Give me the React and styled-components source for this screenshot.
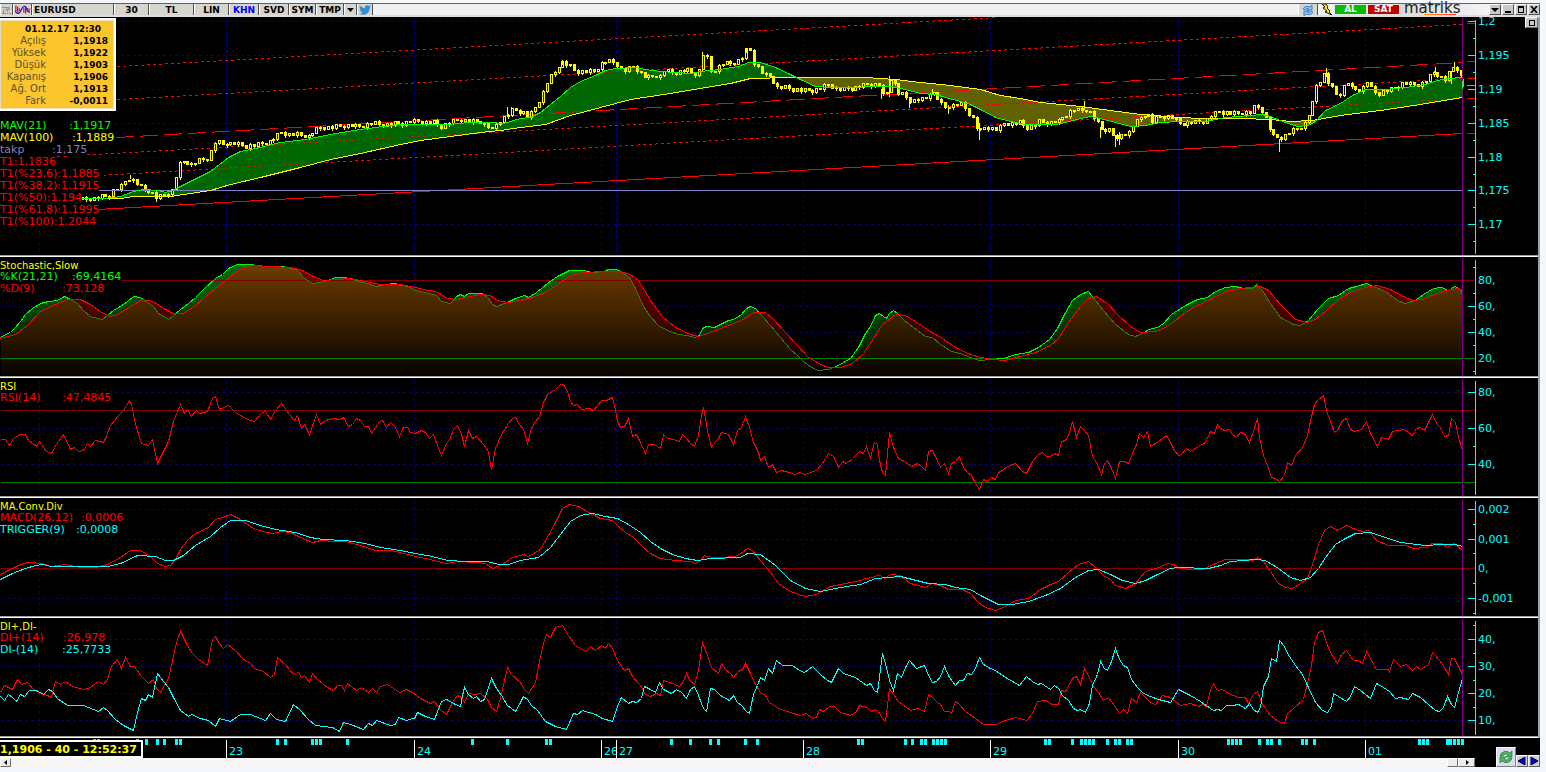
import React from "react";
import styled, { createGlobalStyle } from "styled-components";
import { FaTwitter } from "react-icons/fa";

const PLOT_WIDTH = 1467;
const LAST_X = 1462;
const DAYS = [
  { x: 226, label: "23" },
  { x: 414, label: "24" },
  { x: 601, label: "26" },
  { x: 616, label: "27" },
  { x: 803, label: "28" },
  { x: 990, label: "29" },
  { x: 1178, label: "30" },
  { x: 1365, label: "01" },
];
const GRID_X = [39, ...DAYS.map((day) => day.x)];

const EVENTS = [
  93, 97, 136, 145, 156, 163, 175, 179, 276, 284, 311, 315, 319, 346, 471, 506,
  545, 549, 670, 689, 709, 717, 744, 756, 857, 861, 904, 911, 920, 924, 932,
  936, 940, 944, 1044, 1048, 1071, 1080, 1084, 1088, 1092, 1106, 1114, 1118,
  1126, 1130, 1227, 1231, 1235, 1239, 1258, 1266, 1270, 1278, 1301, 1305, 1313,
  1418, 1422, 1426, 1446, 1449, 1453, 1457, 1461,
];

const MAV21 =
  "80,198 105,198 120,196 133,191 143,189 158,190 165,192 172,190 190,181 210,171 228,157 240,151 255,148 280,142 305,139 330,134 360,129 390,125 400,124 445,124 470,122 490,122 503,123 520,118 530,117 540,112 550,104 560,96 570,87 580,81 595,75 605,70 615,68 635,67 645,69 660,71 690,73 700,71 720,69 738,66 748,62 760,62 775,67 790,74 800,79 815,86 830,87 850,87 875,86 890,86 905,89 920,93 935,94 945,97 960,101 970,104 980,109 995,117 1010,121 1025,124 1055,124 1065,122 1080,118 1090,116 1100,118 1115,122 1130,126 1145,125 1160,122 1180,121 1205,121 1225,117 1250,115 1262,114 1270,116 1285,122 1297,126 1308,125 1315,121 1325,110 1340,103 1352,95 1365,89 1385,89 1405,87 1425,84 1437,80 1448,78 1462,77";
const MAV100 =
  "80,198 120,198 133,196 170,196 190,193 210,190 230,184 260,177 300,167 330,159 360,153 400,144 420,140 450,136 480,132 500,130 520,127 545,124 570,115 600,107 630,99 670,93 700,88 730,83 750,78 790,77 865,77 895,79 920,82 950,85 980,89 1000,95 1020,98 1040,102 1080,106 1110,110 1140,114 1180,117 1200,118 1240,118 1270,119 1290,121 1312,120 1340,115 1380,110 1420,104 1462,97";

const PRICE =
  "80,199 95,198 108,195 115,188 120,187 127,179 130,178 138,184 143,189 150,190 156,197 163,196 169,191 172,190 174,179 178,171 180,162 186,161 190,165 198,160 206,158 210,157 212,143 216,141 222,144 228,142 237,144 246,146 258,144 268,142 275,137 280,132 290,134 298,134 308,136 313,132 318,127 328,127 345,125 360,126 372,123 385,124 400,123 410,121 435,122 441,126 452,121 460,119 470,121 480,121 488,126 493,131 497,122 505,116 512,110 522,111 528,117 533,111 537,103 542,95 545,85 550,77 555,72 558,65 563,62 570,66 575,71 583,71 595,71 600,63 607,61 616,62 620,69 627,70 631,65 637,69 642,75 648,77 655,75 661,76 664,70 672,72 687,70 693,74 699,71 702,53 706,55 711,71 718,67 722,63 733,63 738,60 742,57 746,50 750,50 754,62 760,70 765,75 770,76 777,87 783,87 795,89 800,90 812,90 820,88 828,84 838,89 850,88 862,85 870,84 880,84 882,95 886,97 889,77 893,79 897,93 902,94 910,100 925,99 929,92 935,93 940,103 945,107 950,105 958,104 963,104 966,110 972,117 976,126 980,131 985,126 995,129 1000,127 1003,123 1012,123 1020,122 1025,127 1033,126 1038,121 1045,122 1058,121 1065,115 1073,109 1080,110 1086,109 1092,114 1098,124 1103,131 1108,127 1112,132 1117,140 1120,134 1128,133 1133,125 1140,117 1147,113 1152,121 1158,117 1168,116 1173,117 1178,123 1190,122 1205,121 1210,115 1218,111 1230,113 1250,112 1254,107 1260,107 1264,115 1268,123 1272,135 1280,138 1285,135 1290,131 1298,128 1304,124 1308,116 1313,102 1316,86 1320,80 1324,74 1328,82 1333,89 1337,96 1342,90 1346,80 1352,89 1358,89 1364,87 1368,80 1372,91 1378,93 1385,90 1395,88 1401,83 1414,84 1422,83 1430,76 1434,71 1440,76 1448,80 1450,68 1456,66 1462,78";
const WICKS = [
  [130, 174, 178],
  [156, 196, 201],
  [507, 106, 116],
  [511, 106, 114],
  [562, 59, 64],
  [702, 51, 70],
  [746, 47, 52],
  [753, 50, 60],
  [881, 88, 98],
  [889, 75, 96],
  [909, 98, 107],
  [932, 88, 93],
  [948, 104, 113],
  [979, 122, 139],
  [1084, 100, 109],
  [1100, 126, 137],
  [1115, 134, 146],
  [1119, 131, 144],
  [1279, 138, 151],
  [1326, 67, 76],
  [1435, 66, 72],
  [1451, 70, 83],
  [1454, 61, 68],
];

const STOCH_K =
  "0,337 5,334 10,332 15,327 20,321 25,314 32,308 40,303 48,301 57,300 64,296 70,299 77,303 83,310 90,316 97,318 102,319 107,315 113,310 120,306 127,301 133,296 140,297 147,302 153,306 158,313 165,317 168,319 172,316 180,309 188,303 195,297 203,289 215,278 222,274 228,268 237,264 250,264 265,266 283,266 290,268 297,270 303,277 312,283 320,282 330,279 335,277 345,277 355,280 363,282 370,284 376,286 384,284 395,283 400,285 408,286 415,290 425,292 436,295 441,301 450,303 456,296 460,294 464,296 468,293 482,293 487,297 492,304 496,306 507,302 515,298 524,295 528,297 536,292 547,283 557,276 569,270 583,270 592,272 604,271 608,269 617,269 623,273 629,277 635,288 643,306 650,316 658,325 663,328 670,331 678,334 687,335 694,337 699,335 702,328 706,326 714,327 720,324 728,320 733,319 740,315 746,308 750,306 755,308 763,317 775,331 790,349 797,355 803,361 811,367 818,370 828,369 838,365 850,358 858,347 865,333 870,326 875,315 879,313 883,316 886,318 889,313 893,310 897,313 904,320 913,327 925,336 932,337 940,344 951,351 960,353 970,357 979,360 990,359 1003,358 1015,354 1028,352 1038,347 1049,339 1057,328 1064,314 1072,300 1080,294 1088,291 1095,300 1103,310 1115,324 1128,334 1135,336 1144,332 1148,329 1157,327 1163,323 1171,314 1185,305 1197,299 1207,297 1215,291 1225,287 1235,286 1243,288 1252,288 1256,284 1262,290 1270,303 1280,317 1293,324 1300,325 1307,321 1318,308 1328,298 1338,295 1348,288 1356,286 1366,283 1373,286 1385,291 1397,300 1405,303 1415,300 1423,294 1433,288 1441,287 1448,290 1454,286 1459,288 1462,294";
const STOCH_D =
  "0,338 15,334 27,325 40,311 55,304 67,299 80,299 90,304 103,313 110,316 117,314 130,306 142,299 153,301 163,308 173,313 183,313 195,305 210,292 225,280 238,270 250,265 270,266 290,267 302,270 313,276 323,280 350,278 360,280 380,284 400,284 415,287 428,290 436,291 447,298 457,299 465,297 480,294 490,295 497,300 508,302 520,300 532,297 545,292 557,284 570,275 583,272 605,271 620,271 630,274 638,280 650,300 662,316 675,327 690,334 698,336 707,333 720,328 733,323 743,319 753,312 765,312 772,318 785,332 797,345 807,356 820,364 828,367 840,367 852,363 863,353 873,338 882,324 895,314 905,315 915,321 930,331 942,338 955,347 970,354 980,357 993,359 1004,360 1020,356 1035,352 1050,345 1058,338 1068,322 1080,306 1088,298 1096,296 1107,303 1117,314 1130,326 1140,332 1155,331 1163,328 1175,320 1185,312 1197,305 1210,299 1225,291 1240,288 1260,286 1268,290 1280,304 1295,319 1307,322 1315,319 1325,311 1337,300 1350,292 1365,287 1377,285 1390,289 1403,296 1412,300 1422,299 1432,295 1445,290 1458,288 1462,290";

const RSI =
  "0,439 5,439 9,445 13,438 20,434 25,434 28,440 36,446 39,441 46,451 51,453 56,444 63,434 70,449 74,447 78,451 83,450 87,443 90,446 95,440 103,442 106,436 110,425 118,415 123,410 129,400 131,404 135,424 141,443 148,445 152,439 157,463 160,457 168,441 173,421 177,411 180,404 184,413 187,409 191,416 196,410 199,413 207,411 212,398 215,396 219,409 228,405 235,412 247,419 254,421 262,412 265,411 270,419 275,410 281,403 289,414 294,420 297,415 301,428 304,424 309,434 316,414 320,424 325,420 333,418 339,419 343,417 348,426 352,424 356,418 360,420 364,426 368,426 371,433 379,421 382,420 386,427 390,422 395,427 399,436 403,427 407,427 410,432 415,433 421,430 425,432 429,438 433,434 437,445 441,455 446,443 449,440 453,429 457,425 461,434 464,446 468,430 472,438 476,436 483,444 488,451 491,469 495,448 501,434 508,423 512,418 515,417 519,424 523,429 527,443 531,428 535,421 539,416 543,402 547,394 555,389 560,384 563,384 567,391 570,401 573,405 577,404 581,409 589,408 593,410 597,405 601,400 606,400 612,397 615,410 617,421 620,427 624,426 628,418 632,436 636,434 640,442 645,453 648,444 654,444 660,448 663,434 667,438 673,439 679,441 682,434 686,438 690,443 694,446 698,435 701,415 703,407 707,430 711,447 715,441 718,438 721,432 728,434 733,444 737,430 741,427 745,416 749,427 753,442 758,452 760,460 764,456 768,467 772,464 776,472 781,470 789,472 794,474 799,472 804,474 810,472 816,470 822,463 828,453 833,456 838,467 842,461 846,463 852,458 859,451 863,453 866,446 870,458 874,442 877,444 879,460 882,472 885,475 889,432 893,447 898,458 904,461 911,466 917,463 921,466 925,470 928,451 932,450 936,458 940,467 944,463 948,473 951,463 955,461 959,456 963,467 967,472 971,475 975,483 979,489 983,479 987,481 991,477 995,479 998,472 1002,470 1007,466 1015,463 1022,471 1026,473 1032,461 1037,455 1042,452 1046,456 1050,456 1054,453 1058,455 1061,441 1065,440 1069,433 1072,421 1076,437 1080,426 1084,430 1088,435 1092,456 1096,462 1101,474 1104,463 1107,460 1111,468 1115,478 1119,461 1124,461 1128,463 1132,453 1136,444 1139,433 1143,437 1147,431 1150,446 1158,441 1166,435 1170,442 1174,450 1178,455 1181,454 1186,448 1190,451 1198,446 1205,442 1210,431 1214,433 1217,424 1220,428 1224,430 1229,429 1232,434 1236,437 1240,432 1244,433 1249,442 1253,431 1257,418 1259,437 1263,455 1267,465 1271,477 1275,478 1279,481 1284,475 1287,462 1291,465 1295,455 1302,447 1307,435 1311,416 1314,404 1318,399 1323,395 1326,410 1330,421 1334,432 1337,430 1342,420 1346,418 1350,429 1354,431 1361,429 1366,421 1370,433 1377,446 1381,437 1388,439 1392,431 1404,429 1412,435 1416,428 1420,427 1424,430 1432,414 1436,423 1440,427 1444,436 1448,435 1451,418 1455,422 1458,437 1462,450";

const MACD =
  "0,574 10,569 20,564 28,562 42,563 50,566 65,564 80,567 95,567 107,564 120,557 130,550 140,550 150,556 157,563 165,566 170,565 175,559 180,549 187,540 195,533 208,527 215,519 222,517 230,514 240,519 253,528 262,531 273,533 280,531 290,532 300,537 312,542 320,540 335,541 345,541 360,545 375,550 390,550 400,552 415,556 430,559 445,563 458,561 475,562 485,563 492,568 502,564 512,557 523,554 528,556 540,549 548,535 555,522 562,508 569,504 578,506 590,513 600,518 612,520 618,526 625,532 633,537 642,546 650,553 660,558 675,560 690,561 695,563 700,560 704,555 711,557 720,557 735,556 742,552 747,548 752,550 760,560 770,572 778,583 788,590 798,594 805,596 816,594 830,586 845,583 860,580 865,578 873,577 878,574 884,578 890,574 900,575 910,583 918,585 925,587 931,583 940,585 948,589 962,589 970,593 978,602 985,607 995,610 1005,606 1015,600 1028,598 1040,589 1050,584 1058,581 1068,572 1078,564 1088,561 1095,567 1103,575 1110,579 1115,585 1125,588 1135,583 1145,571 1158,567 1168,563 1173,564 1180,568 1190,569 1202,569 1215,563 1225,559 1245,559 1252,560 1258,557 1263,561 1270,571 1278,583 1285,587 1292,588 1300,583 1307,578 1312,564 1318,544 1324,530 1330,526 1337,530 1346,525 1355,529 1362,531 1368,530 1376,540 1388,545 1405,545 1413,548 1425,547 1432,543 1442,543 1447,547 1454,543 1462,550";
const TRIGGER =
  "0,579 12,573 25,568 35,565 43,564 50,566 80,566 107,566 120,563 137,555 155,556 165,560 173,560 183,555 195,545 210,536 220,527 230,520 245,520 260,525 275,529 295,532 310,537 322,539 345,540 365,543 380,547 400,550 415,553 432,556 447,560 465,561 487,561 498,564 508,564 520,560 538,557 550,547 560,534 570,521 580,515 592,513 605,516 617,518 628,524 640,532 650,541 660,548 672,554 685,558 697,560 710,558 740,557 747,553 760,554 775,565 790,580 805,588 820,591 840,587 860,584 875,578 900,576 912,579 928,583 945,584 955,587 970,589 980,595 990,600 998,604 1012,604 1028,601 1045,595 1060,588 1075,577 1088,570 1098,569 1110,574 1122,580 1135,583 1145,580 1155,575 1170,568 1178,567 1208,568 1220,565 1230,561 1255,559 1265,560 1278,568 1290,577 1300,580 1310,577 1318,568 1325,557 1335,544 1345,538 1355,533 1370,532 1385,537 1400,542 1425,545 1440,544 1455,544 1462,546";

const DI_PLUS =
  "0,692 4,685 12,689 17,679 21,684 27,682 33,689 40,693 47,695 51,697 55,681 60,684 65,681 72,686 83,689 90,687 98,681 103,684 107,679 111,666 117,659 121,668 125,657 130,666 134,666 141,676 148,683 153,679 156,688 160,692 168,678 172,660 176,642 180,631 187,645 192,653 198,659 207,665 212,639 215,636 218,642 223,648 227,644 235,650 243,659 250,663 254,668 263,671 270,677 274,674 277,657 285,664 293,674 298,672 301,677 304,675 309,682 312,673 318,680 327,687 333,690 337,685 341,685 344,690 347,683 356,690 361,687 368,692 372,688 376,692 380,686 387,684 393,688 399,692 406,689 412,692 420,698 430,703 434,701 440,709 446,714 452,702 457,695 461,697 464,702 468,693 475,694 480,693 487,699 491,707 496,711 500,698 504,680 507,667 511,674 520,682 524,689 528,693 535,682 539,661 543,643 546,634 550,637 555,627 562,625 568,635 575,645 585,651 590,646 595,650 601,645 605,648 608,643 612,648 617,660 624,670 628,668 632,676 640,685 645,694 650,696 656,693 660,695 663,680 672,683 679,686 683,681 686,673 690,681 694,684 698,670 702,642 707,655 711,667 718,673 721,663 725,669 730,673 733,677 738,671 742,669 745,663 750,673 755,684 760,692 765,695 769,702 778,708 790,712 800,715 806,713 812,718 816,717 819,709 823,711 829,706 834,706 840,712 850,715 856,711 859,705 867,707 871,711 875,709 878,711 882,718 885,721 889,688 893,694 898,701 910,710 917,708 924,711 928,694 932,697 937,702 940,704 944,711 949,711 951,713 955,701 959,704 965,711 975,718 983,724 995,724 1005,720 1015,717 1026,720 1032,713 1037,701 1045,700 1052,704 1058,704 1061,690 1065,691 1072,678 1076,676 1080,684 1084,668 1088,675 1093,686 1098,692 1103,700 1108,697 1114,705 1119,713 1123,709 1127,713 1131,698 1136,702 1140,692 1145,697 1150,702 1155,704 1162,695 1170,697 1180,705 1190,703 1198,706 1202,704 1206,706 1210,690 1213,683 1217,690 1222,689 1228,693 1238,697 1245,697 1248,703 1253,694 1257,691 1262,704 1270,715 1278,721 1284,723 1287,713 1293,708 1303,699 1307,683 1311,665 1314,642 1318,632 1322,630 1327,645 1332,656 1337,663 1341,654 1346,650 1353,660 1358,660 1362,663 1366,651 1371,660 1376,669 1388,669 1389,671 1393,659 1400,666 1406,664 1412,670 1416,666 1420,669 1428,664 1432,652 1435,655 1442,664 1448,674 1451,658 1454,658 1462,674";
const DI_MINUS =
  "0,696 4,700 8,694 12,697 16,701 20,694 24,696 29,690 36,690 43,694 48,689 52,691 57,698 67,705 83,705 98,711 103,707 107,710 115,719 123,725 133,730 137,712 141,698 145,700 148,694 152,697 157,673 163,681 168,687 173,697 180,710 188,716 191,714 200,718 208,720 215,726 219,718 230,721 240,714 250,714 265,720 270,713 276,719 285,721 293,704 300,710 308,719 315,725 332,727 339,731 343,722 350,724 363,729 368,723 372,725 376,720 390,725 395,724 398,717 406,720 412,718 414,718 417,712 425,716 434,719 437,711 441,701 446,699 455,704 460,706 462,695 464,687 468,694 473,698 476,696 480,701 484,699 491,678 496,688 501,695 507,705 515,711 519,704 523,696 527,699 531,705 537,710 545,721 555,726 566,729 573,713 577,714 582,710 595,714 602,718 612,721 617,706 621,697 628,703 632,701 636,702 641,698 644,686 650,689 655,692 659,682 663,689 671,693 676,689 681,692 686,698 690,689 694,686 698,695 703,708 706,711 710,688 714,689 720,695 729,700 733,695 737,702 741,705 746,711 749,713 753,694 757,685 760,677 764,680 768,668 772,673 776,660 782,665 792,665 799,670 804,672 812,666 820,674 827,680 831,682 838,668 843,673 855,677 866,685 870,683 874,690 877,692 882,653 885,663 889,680 893,690 897,673 901,677 905,667 909,660 916,668 924,665 928,675 932,682 936,681 940,676 944,666 949,677 955,685 959,680 963,680 967,673 971,674 975,668 979,657 983,664 990,668 995,670 1005,677 1012,681 1019,685 1026,676 1032,681 1037,684 1041,683 1050,689 1054,685 1058,688 1062,695 1068,700 1073,708 1077,710 1080,709 1085,712 1089,703 1092,685 1097,674 1100,661 1104,668 1107,670 1111,661 1115,648 1119,659 1123,665 1127,667 1131,679 1137,687 1143,693 1150,696 1158,699 1170,702 1178,689 1190,695 1200,701 1213,710 1217,709 1221,710 1226,705 1232,705 1238,704 1245,708 1249,703 1253,709 1257,712 1260,707 1263,686 1268,676 1271,658 1276,661 1279,640 1284,646 1287,653 1295,665 1302,674 1307,685 1315,702 1322,710 1327,712 1331,706 1333,693 1338,696 1346,701 1350,696 1354,686 1360,690 1370,698 1376,683 1383,687 1389,691 1395,698 1400,697 1408,699 1412,693 1420,697 1428,704 1435,710 1439,711 1443,707 1447,696 1451,704 1454,707 1458,692 1462,678";

const reversePoints = (points) => points.split(" ").reverse().join(" ");

// one bar per half hour, 48 bars a day
const BAR_STEP = 187.5 / 48;

const buildCandles = () => {
  const keys = PRICE.split(" ").map((pair) => pair.split(",").map(Number));
  const priceAt = (x) => {
    const next = keys.findIndex((key) => key[0] >= x);
    if (next <= 0) return keys[0][1];
    const [x0, y0] = keys[next - 1];
    const [x1, y1] = keys[next];
    return y0 + ((y1 - y0) * (x - x0)) / (x1 - x0);
  };
  const candles = [];
  let open = 199;
  for (let i = 0; 82 + i * BAR_STEP < LAST_X - 1; i++) {
    const x = 82 + i * BAR_STEP;
    const noise = ((i * 7) % 5) - 2;
    const close = Math.round(priceAt(x) + noise);
    const top = Math.min(open, close);
    const bottom = Math.max(open, close, top + 1);
    candles.push({
      x: Math.round(x),
      top,
      bottom,
      high: top - ((i * 5) % 3),
      low: bottom + ((i * 11) % 3),
      rising: close < open,
    });
    open = close;
  }
  return candles;
};
const CANDLES = buildCandles();

const PriceSeries = () => (
  <>
    <defs>
      <clipPath id="aboveMav">
        <polygon points={`80,0 ${MAV100} 1462,0`} />
      </clipPath>
    </defs>
    <polygon
      points={`${MAV21} ${reversePoints(MAV100)}`}
      fill="#666600"
      fillOpacity="0.95"
    />
    <polygon
      points={`${MAV21} ${reversePoints(MAV100)}`}
      fill="#006600"
      clipPath="url(#aboveMav)"
    />
    <g stroke="#ff0000">
      <line x1="97" y1="209" x2={LAST_X} y2="133" />
      <line x1="97" y1="175" x2={LAST_X} y2="98" strokeDasharray="3 3" />
      <line x1="57" y1="156" x2={LAST_X} y2="78" strokeDasharray="3 3" />
      <line x1="116" y1="137" x2={LAST_X} y2="62" strokeDasharray="18 6" />
      <line x1="117" y1="99" x2={LAST_X} y2="24" strokeDasharray="3 3" />
      <line x1="117" y1="66" x2="997" y2="17" strokeDasharray="3 3" />
    </g>
    <g stroke="#ffff00">
      {CANDLES.map((c) => (
        <React.Fragment key={c.x}>
          <line x1={c.x} y1={c.high} x2={c.x} y2={c.low} />
          <rect
            x={c.x - 1}
            y={c.top}
            width="2"
            height={c.bottom - c.top}
            fill={c.rising ? "#000000" : "#ffff00"}
          />
        </React.Fragment>
      ))}
      {WICKS.map(([x, high, low]) => (
        <line key={x} x1={x} y1={high} x2={x} y2={low} />
      ))}
    </g>
    <line x1="97" y1="190" x2={LAST_X} y2="190" stroke="#8080c8" />
    <polyline points={MAV100} stroke="#ffff00" />
    <polyline points={MAV21} stroke="#00ff00" />
  </>
);

const StochasticSeries = () => (
  <>
    <defs>
      <linearGradient
        id="both"
        gradientUnits="userSpaceOnUse"
        x1="0"
        y1="264"
        x2="0"
        y2="376"
      >
        <stop offset="0" stopColor="#6e3c00" />
        <stop offset="1" stopColor="#060300" />
      </linearGradient>
      <linearGradient
        id="rising"
        gradientUnits="userSpaceOnUse"
        x1="0"
        y1="264"
        x2="0"
        y2="376"
      >
        <stop offset="0" stopColor="#007014" />
        <stop offset="1" stopColor="#000800" />
      </linearGradient>
      <linearGradient
        id="falling"
        gradientUnits="userSpaceOnUse"
        x1="0"
        y1="264"
        x2="0"
        y2="376"
      >
        <stop offset="0" stopColor="#7a0000" />
        <stop offset="1" stopColor="#080000" />
      </linearGradient>
      <clipPath id="underK">
        <polygon points={`0,376 ${STOCH_K} 1462,376`} />
      </clipPath>
      <clipPath id="aboveD">
        <polygon points={`0,250 ${STOCH_D} 1462,250`} />
      </clipPath>
    </defs>
    <polygon points={`0,376 ${STOCH_K} 1462,376`} fill="url(#rising)" />
    <polygon points={`0,376 ${STOCH_D} 1462,376`} fill="url(#falling)" />
    <polygon
      points={`0,376 ${STOCH_D} 1462,376`}
      fill="url(#both)"
      clipPath="url(#underK)"
    />
    <line x1="0" y1="280" x2="1475" y2="280" stroke="#800000" />
    <line x1="0" y1="358" x2="1475" y2="358" stroke="#008000" />
    <polyline points={STOCH_K} stroke="#308000" />
    <polyline points={STOCH_K} stroke="#00ff00" clipPath="url(#aboveD)" />
    <polyline points={STOCH_D} stroke="#ff0000" />
  </>
);

const RsiSeries = () => (
  <>
    <line x1="0" y1="410" x2="1475" y2="410" stroke="#800000" />
    <line x1="0" y1="482" x2="1475" y2="482" stroke="#008000" />
    <polyline points={RSI} stroke="#ff0000" />
  </>
);

const MacdSeries = () => (
  <>
    <line x1="0" y1="568" x2="1475" y2="568" stroke="#800000" />
    <polyline points={MACD} stroke="#ff0000" />
    <polyline points={TRIGGER} stroke="#00ffff" />
  </>
);

const DiSeries = () => (
  <>
    <polyline points={DI_PLUS} stroke="#ff0000" />
    <polyline points={DI_MINUS} stroke="#00ffff" />
  </>
);

const PANELS = [
  {
    id: "price",
    top: 17,
    height: 238,
    Series: PriceSeries,
    grid: [21, 55, 89, 123, 157, 224],
    ticks: [
      [21, "1,2"],
      [55, "1,195"],
      [89, "1,19"],
      [123, "1,185"],
      [157, "1,18"],
      [190, "1,175"],
      [224, "1,17"],
    ],
    minor: [38, 72, 106, 140, 174, 207, 241],
    marks: [
      [23, "#ff0000"],
      [61, "#ff0000"],
      [78, "#ff0000"],
      [98, "#ff0000"],
      [133, "#ff0000"],
      [85, "#00ff00"],
    ],
    legend: [
      { name: "MAV(21)", value: ":1,1917", color: "#00ff00", column: 69 },
      { name: "MAV(100)", value: ":1,1889", color: "#ffff00", column: 72 },
      { name: "takp", value: ":1,175", color: "#8080c8", column: 52 },
      { name: "T1:1,1836", color: "#ff0000" },
      { name: "T1(%23,6):1,1885", color: "#ff0000" },
      { name: "T1(%38,2):1,1915", color: "#ff0000" },
      { name: "T1(%50):1,194", color: "#ff0000" },
      { name: "T1(%61,8):1,1995", color: "#ff0000" },
      { name: "T1(%100):1,2044", color: "#ff0000" },
    ],
  },
  {
    id: "stochastic",
    top: 257,
    height: 119,
    Series: StochasticSeries,
    title: "Stochastic,Slow",
    grid: [306, 332],
    ticks: [
      [280, "80,"],
      [306, "60,"],
      [332, "40,"],
      [358, "20,"],
    ],
    minor: [267, 293, 319, 345, 371],
    marks: [
      [280, "#800000"],
      [358, "#008000"],
    ],
    legend: [
      { name: "%K(21,21)", value: ":69,4164", color: "#00ff00", column: 72 },
      { name: "%D(9)", value: ":73,128", color: "#ff0000", column: 62 },
    ],
  },
  {
    id: "rsi",
    top: 378,
    height: 118,
    Series: RsiSeries,
    title: "RSI",
    grid: [392, 428, 464],
    ticks: [
      [392, "80,"],
      [428, "60,"],
      [464, "40,"],
    ],
    minor: [446],
    marks: [
      [410, "#800000"],
      [482, "#008000"],
    ],
    legend: [
      { name: "RSI(14)", value: ":47,4845", color: "#ff0000", column: 62 },
    ],
  },
  {
    id: "macd",
    top: 498,
    height: 118,
    Series: MacdSeries,
    title: "MA.Conv.Div",
    grid: [509, 539, 598],
    ticks: [
      [509, "0,002"],
      [539, "0,001"],
      [568, "0,"],
      [598, "-0,001"],
    ],
    minor: [524, 553, 583, 613],
    marks: [[568, "#800000"]],
    legend: [
      { name: "MACD(26,12)", value: ":0,0006", color: "#ff0000", column: 81 },
      { name: "TRIGGER(9)", value: ":0,0008", color: "#00ffff", column: 76 },
    ],
  },
  {
    id: "di",
    top: 618,
    height: 118,
    Series: DiSeries,
    title: "DI+,DI-",
    grid: [639, 666, 693, 720],
    ticks: [
      [639, "40,"],
      [666, "30,"],
      [693, "20,"],
      [720, "10,"],
    ],
    minor: [625, 653, 680, 707],
    marks: [],
    legend: [
      { name: "DI+(14)", value: ":26,978", color: "#ff0000", column: 63 },
      { name: "DI-(14)", value: ":25,7733", color: "#00ffff", column: 62 },
    ],
  },
];

const BAR_VALUES = [
  ["Açılış", "1,1918"],
  ["Yüksek", "1,1922"],
  ["Düşük", "1,1903"],
  ["Kapanış", "1,1906"],
  ["Ağ. Ort", "1,1913"],
  ["Fark", "-0,0011"],
];

const InfoBox = () => (
  <SInfoTable>
    <thead>
      <tr>
        <th colSpan={2}>01.12.17 12:30</th>
      </tr>
    </thead>
    <tbody>
      {BAR_VALUES.map(([label, value]) => (
        <tr key={label}>
          <th scope="row">{label}</th>
          <td>{value}</td>
        </tr>
      ))}
    </tbody>
  </SInfoTable>
);

const ChartPanel = ({ panel }) => {
  const { top, height, Series } = panel;
  const bottom = top + height;
  return (
    <SPanel>
      <SPlot
        $height={height}
        viewBox={`0 ${top} ${PLOT_WIDTH} ${height}`}
        preserveAspectRatio="none"
        shapeRendering="crispEdges"
      >
        <g transform="translate(0.5 0.5)" fill="none">
          <g stroke="#000088" strokeDasharray="3 3">
            {panel.grid.map((y) => (
              <line key={y} x1="0" y1={y} x2={LAST_X} y2={y} />
            ))}
            {GRID_X.map((x) => (
              <line key={x} x1={x} y1={top + 2} x2={x} y2={bottom - 4} />
            ))}
          </g>
          <Series />
          <line x1={LAST_X} y1={top} x2={LAST_X} y2={bottom} stroke="#800080" />
          {panel.id === "price" && (
            <path d="M1462 80V88M1463 78V86" stroke="#50e050" />
          )}
        </g>
      </SPlot>
      <SAxis $height={height} viewBox={`1467 ${top} 71 ${height}`}>
        <g transform="translate(0.5 0.5)" shapeRendering="crispEdges">
          <g stroke="#00ffff">
            <line x1="1475" y1={top + 2} x2="1475" y2={bottom - 2} />
            {panel.ticks.map(([y]) => (
              <line key={y} x1="1467" y1={y} x2="1475" y2={y} />
            ))}
            {panel.minor.map((y) => (
              <line key={y} x1="1472" y1={y} x2="1475" y2={y} />
            ))}
          </g>
          {panel.marks.map(([y, color]) => (
            <line key={y} x1="1466" y1={y} x2="1474" y2={y} stroke={color} />
          ))}
        </g>
        {panel.ticks.map(([y, label]) => (
          <text key={y} x="1478" y={y + 4}>
            {label}
          </text>
        ))}
      </SAxis>
      {panel.id === "price" && (
        <>
          <InfoBox />
          <SPanelButton type="button" aria-label="Büyüt" />
        </>
      )}
      <SLegend $top={panel.title ? 3 : 103}>
        {panel.title && <STitle>{panel.title}</STitle>}
        {panel.legend.map((row) => (
          <SLegendRow key={row.name} $color={row.color}>
            <SLegendName $column={row.column}>{row.name}</SLegendName>
            {row.value}
          </SLegendRow>
        ))}
      </SLegend>
    </SPanel>
  );
};

const Toolbar = () => (
  <SToolbar>
    <SToolButton $width={13} type="button" aria-label="Şablon">
      <svg width="11" height="9" viewBox="0 0 11 9">
        <path d="M0 1H9V3H5V5M2 3V8M7 4V6" stroke="#777" fill="none" />
        <path d="M0 8H11" stroke="#c44" strokeDasharray="2 1" />
      </svg>
    </SToolButton>
    <SToolButton $width={19} type="button" aria-label="Göstergeler">
      <svg width="17" height="10" viewBox="0 0 17 10">
        <path
          d="M1 0V6M3 1V8M5 3V6M10 3V8M12 1V9M14 3V7M16 3V6"
          stroke="#e01010"
          strokeWidth="1.4"
        />
        <path
          d="M0 6C3 11 5 9 7 5S11 -1 13 3S15 8 17 7"
          stroke="#1818d8"
          strokeWidth="1.4"
          fill="none"
        />
      </svg>
    </SToolButton>
    <SToolButton $width={82} $left type="button">
      EURUSD
    </SToolButton>
    <SToolButton $width={35} type="button">
      30
    </SToolButton>
    <SToolButton $width={45} type="button">
      TL
    </SToolButton>
    <SToolButton $width={35} type="button">
      LIN
    </SToolButton>
    <SToolButton $width={30} $active type="button">
      KHN
    </SToolButton>
    <SToolButton $width={30} type="button">
      SVD
    </SToolButton>
    <SToolButton $width={27} type="button">
      SYM
    </SToolButton>
    <SToolButton $width={28} type="button">
      TMP
    </SToolButton>
    <SToolButton $width={13} type="button" aria-label="Şablon listesi">
      <svg width="7" height="4" viewBox="0 0 7 4">
        <path d="M0 0H7L3.5 4Z" />
      </svg>
    </SToolButton>
    <SToolButton $width={16} type="button" aria-label="Twitter">
      <FaTwitter size={12} color="#2f8fd4" />
    </SToolButton>
    <SSpacer />
    <SToolButton $width={20} type="button" aria-label="Yenile">
      <svg width="16" height="11" viewBox="0 0 16 11">
        <path
          d="M3 4Q5 0 10 2L12 0V5H7L9 4Q6 3 5 5Z"
          fill="#8cc4f4"
          stroke="#2070c8"
          strokeWidth="0.8"
        />
        <path
          d="M13 7Q11 11 6 9L4 11V6H9L7 7Q10 8 11 6Z"
          fill="#8cc4f4"
          stroke="#2070c8"
          strokeWidth="0.8"
        />
      </svg>
    </SToolButton>
    <SBolt width="14" height="11" viewBox="0 0 14 11">
      <path
        d="M3 0H7L9 3L8 4L11 7L10 8L13 11L6 8L8 7L4 4L6 3Z"
        fill="#ffee00"
        stroke="#111"
      />
    </SBolt>
    <STradeButton $color="#00bf00" type="button">
      AL
    </STradeButton>
    <STradeButton $color="#c00000" type="button">
      SAT
    </STradeButton>
    <SBrand>matriks</SBrand>
    <SWindowButton type="button" aria-label="Menü">
      <svg width="8" height="7" viewBox="0 0 8 7">
        <path d="M0 2H8L4 6Z" />
      </svg>
    </SWindowButton>
    <SWindowButton type="button" aria-label="Simge durumuna küçült">
      <svg width="8" height="7" viewBox="0 0 8 7">
        <path d="M1 5H7V7H1Z" />
      </svg>
    </SWindowButton>
    <SWindowButton type="button" aria-label="Ekranı kapla">
      <svg width="8" height="7" viewBox="0 0 8 7">
        <path d="M1 0H7V7H1ZM2 2V6H6V2Z" fillRule="evenodd" />
      </svg>
    </SWindowButton>
    <SWindowButton type="button" aria-label="Kapat">
      <svg width="8" height="7" viewBox="0 0 8 7">
        <path d="M1 0L7 7M7 0L1 7" stroke="#000" strokeWidth="1.6" />
      </svg>
    </SWindowButton>
  </SToolbar>
);

const percent = (x) => `${(x / PLOT_WIDTH) * 100}%`;

const TimeAxis = () => (
  <STimeAxis>
    <STimeScale>
      {EVENTS.map((x) => (
        <SEvent key={x} style={{ left: percent(x) }} />
      ))}
      {DAYS.map((day) => (
        <SDay key={day.x} style={{ left: percent(day.x) }}>
          {day.label}
        </SDay>
      ))}
      <SQuote>1,1906 - 40 - 12:52:37</SQuote>
    </STimeScale>
  </STimeAxis>
);

const Footer = () => (
  <SFooter>
    <SScrollbar>
      <SScrollButton $width={11} type="button" aria-label="Sola kaydır">
        <svg width="4" height="5" viewBox="0 0 4 5">
          <path d="M3 0V5L0 2.5Z" />
        </svg>
      </SScrollButton>
      <SSpacer />
      <SScrollButton $width={11} type="button" aria-label="Konum" />
      <SScrollButton $width={17} type="button" aria-label="Sağa kaydır">
        <svg width="4" height="5" viewBox="0 0 4 5">
          <path d="M1 0V5L4 2.5Z" />
        </svg>
      </SScrollButton>
    </SScrollbar>
    <SFooterButtons>
      <SRefreshButton type="button" aria-label="Grafiği yenile">
        <svg width="16" height="16" viewBox="0 0 16 16">
          <path
            d="M2 7A6 6 0 0 1 12 4L14 2V8H8L10 6A3 3 0 0 0 5 7Z"
            fill="#48b860"
            stroke="#156a25"
            strokeWidth="0.6"
          />
          <path
            d="M14 9A6 6 0 0 1 4 12L2 14V8H8L6 10A3 3 0 0 0 11 9Z"
            fill="#48b860"
            stroke="#156a25"
            strokeWidth="0.6"
          />
        </svg>
      </SRefreshButton>
      <SStepButton type="button" aria-label="Geri">
        <svg width="8" height="8" viewBox="0 0 8 8">
          <path d="M7 0V8L0 4Z" fill="#0000c8" stroke="#000040" />
        </svg>
      </SStepButton>
      <SStepButton type="button" aria-label="İleri">
        <svg width="8" height="8" viewBox="0 0 8 8">
          <path d="M1 0V8L8 4Z" fill="#0000c8" stroke="#000040" />
        </svg>
      </SStepButton>
    </SFooterButtons>
  </SFooter>
);

export default function App() {
  return (
    <>
      <GlobalStyle />
      <SWindow>
        <Toolbar />
        <SPanels>
          {PANELS.map((panel) => (
            <ChartPanel key={panel.id} panel={panel} />
          ))}
        </SPanels>
        <TimeAxis />
        <Footer />
      </SWindow>
    </>
  );
}

const GlobalStyle = createGlobalStyle`
  *,
  *::before,
  *::after {
    box-sizing: border-box;
  }
  body {
    margin: 0;
    background-color: #f4f7fc;
    font-family: "DejaVu Sans", Verdana, sans-serif;
    font-size: 11px;
  }
  button {
    font-family: inherit;
    cursor: pointer;
  }
`;

const SWindow = styled.div`
  margin: 3px 6px 0 0;
`;

const SToolbar = styled.div`
  display: flex;
  height: 14px;
  background-color: #f0f0f0;
  border-top: 1px solid #606060;
  border-bottom: 2px solid #dcdcdc;
`;

const SToolButton = styled.button`
  display: flex;
  align-items: center;
  justify-content: ${(props) => (props.$left ? "flex-start" : "center")};
  width: ${(props) => props.$width}px;
  padding: 1px 1px 0;
  border: 0;
  border-right: 1px solid #505050;
  border-left: 1px solid #ffffff;
  background-color: #d6d6ce;
  color: ${(props) => (props.$active ? "#0000ff" : "#000000")};
  font-size: 9px;
  font-weight: 700;
  line-height: 11px;
`;

const SSpacer = styled.div`
  flex: 1;
`;

const SBolt = styled.svg`
  margin: 0 1px;
`;

const STradeButton = styled.button`
  width: 33px;
  padding: 0;
  border: 1px solid #e4e4e4;
  background-color: ${(props) => props.$color};
  color: #ffffff;
  font-size: 9px;
  font-weight: 700;
  line-height: 9px;
`;

const SBrand = styled.div`
  width: 88px;
  padding-left: 4px;
  background: linear-gradient(90deg, #ff9a20, #ff3020) 24px 10px / 32px 1px
      no-repeat,
    linear-gradient(90deg, #d8d8d8, #f4f4f4);
  color: #222222;
  font-size: 15px;
  font-weight: 400;
  line-height: 9px;
`;

const SWindowButton = styled.button`
  display: flex;
  align-items: center;
  justify-content: center;
  width: 12px;
  margin-left: 1px;
  padding: 0;
  border: 1px solid;
  border-color: #ffffff #505050 #505050 #ffffff;
  background-color: #c8c8c8;
`;

const SPanels = styled.div`
  border-right: 2px solid #a0a0a0;
`;

const SPanel = styled.section`
  position: relative;
  display: flex;
  padding-bottom: 2px;
  background-color: #000000;
  &::after {
    content: "";
    position: absolute;
    right: 0;
    bottom: 0;
    left: 0;
    height: 2px;
    border-top: 1px solid #a0a0a0;
    background-color: #ffffff;
  }
`;

const SPlot = styled.svg`
  flex: 1;
  min-width: 0;
  height: ${(props) => props.$height}px;
`;

const SAxis = styled.svg`
  width: 71px;
  height: ${(props) => props.$height}px;
  fill: #00ffff;
`;

const SLegend = styled.div`
  position: absolute;
  top: ${(props) => props.$top}px;
  left: 0;
  display: flex;
  flex-direction: column;
  align-items: flex-start;
`;

const STitle = styled.div`
  background-color: #000000;
  color: #ffff00;
  font-size: 10px;
  line-height: 11px;
`;

const SLegendRow = styled.div`
  display: flex;
  background-color: #000000;
  color: ${(props) => props.$color};
  line-height: 12px;
  white-space: nowrap;
`;

const SLegendName = styled.span`
  min-width: ${(props) => props.$column || 0}px;
`;

const SInfoTable = styled.table`
  position: absolute;
  top: 1px;
  left: 0;
  width: 116px;
  padding: 3px 6px 2px 0;
  border: 2px solid #ffffff;
  border-left: 0;
  border-spacing: 0;
  background-color: #fbc62d;
  box-shadow: inset 0 0 0 1px #e8dcc0;
  line-height: 12px;
  text-align: right;
  th {
    width: 46px;
    padding: 0;
    color: #5c5030;
    font-size: 10px;
    font-weight: 400;
  }
  thead th {
    padding-left: 18px;
    color: #000000;
    font-size: 9px;
    font-weight: 700;
    text-align: center;
  }
  td {
    padding: 0;
    color: #000000;
    font-size: 9px;
    font-weight: 700;
  }
`;

const SPanelButton = styled.button`
  position: absolute;
  top: 0;
  right: 0;
  display: flex;
  align-items: center;
  justify-content: center;
  width: 13px;
  height: 11px;
  padding: 0;
  border: 1px solid;
  border-color: #ffffff #707070 #707070 #ffffff;
  background-color: #c8c8c8;
  &::before {
    content: "";
    width: 6px;
    height: 6px;
    border: 1px solid #000000;
  }
`;

const STimeAxis = styled.div`
  height: 20px;
  padding-right: 73px;
  background-color: #000000;
`;

const STimeScale = styled.div`
  position: relative;
  height: 20px;
`;

const SEvent = styled.i`
  position: absolute;
  top: 1px;
  width: 3px;
  height: 6px;
  background-color: #00ffff;
`;

const SDay = styled.span`
  position: absolute;
  top: 2px;
  height: 18px;
  padding: 5px 0 0 2px;
  border-left: 1px solid #ffffff;
  color: #00ffff;
  line-height: 13px;
`;

const SQuote = styled.div`
  position: absolute;
  top: 2px;
  left: 0;
  height: 18px;
  padding: 1px 4px 0 0;
  border: 2px solid #ffffff;
  border-left: 0;
  background-color: #000000;
  color: #ffff00;
  font-weight: 700;
  line-height: 13px;
  white-space: nowrap;
`;

const SFooter = styled.div`
  display: flex;
  height: 9px;
  background-color: #000000;
`;

const SScrollbar = styled.div`
  display: flex;
  flex: 1;
  background-color: #f8f6f6;
`;

const SScrollButton = styled.button`
  display: flex;
  align-items: center;
  justify-content: center;
  width: ${(props) => props.$width}px;
  padding: 0;
  border: 1px solid;
  border-color: #ffffff #707070 #707070 #ffffff;
  background-color: #ececec;
`;

const SFooterButtons = styled.div`
  display: flex;
  align-items: flex-end;
  justify-content: flex-end;
  width: 65px;
`;

const SRefreshButton = styled.button`
  display: flex;
  align-items: center;
  justify-content: center;
  flex: none;
  width: 20px;
  height: 20px;
  padding: 0;
  border: 1px solid;
  border-color: #ffffff #808080 #808080 #ffffff;
  background-color: #d8dcf0;
`;

const SStepButton = styled.button`
  display: flex;
  align-items: center;
  justify-content: center;
  flex: none;
  width: 12px;
  height: 12px;
  padding: 0;
  border: 1px solid;
  border-color: #ffffff #606060 #606060 #ffffff;
  background-color: #d0d0d0;
`;
